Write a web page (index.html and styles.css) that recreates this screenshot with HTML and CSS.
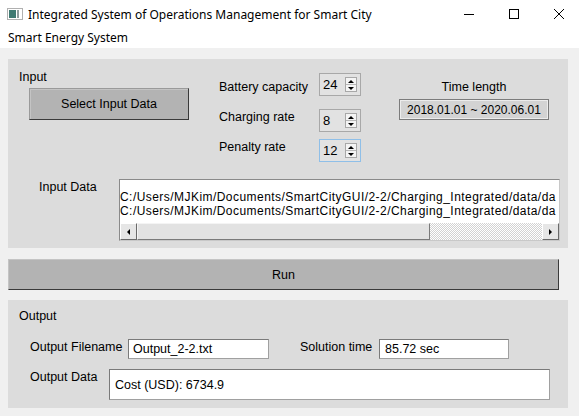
FILE: index.html
```html
<!DOCTYPE html>
<html>
<head>
<meta charset="utf-8">
<link rel="stylesheet" href="styles.css">
</head>
<body>
<div class="titlebar">
  <svg class="app-icon" width="16" height="12" viewBox="0 0 16 12">
    <rect x="0.5" y="0.5" width="15" height="11" fill="#fff" stroke="#b0b0b0"/>
    <rect x="2" y="2" width="7" height="8" fill="#3f7a72"/>
    <rect x="10" y="2" width="2" height="8" fill="#8f9c9c"/>
  </svg>
  <span class="title">Integrated System of Operations Management for Smart City</span>
  <div class="controls">
    <span class="ctl"><svg width="12" height="12" viewBox="0 0 12 12"><path d="M1 6.5h10" stroke="#000" stroke-width="1"/></svg></span>
    <span class="ctl"><svg width="12" height="12" viewBox="0 0 12 12"><rect x="1.5" y="1.5" width="9" height="9" fill="none" stroke="#000"/></svg></span>
    <span class="ctl"><svg width="12" height="12" viewBox="0 0 12 12"><path d="M1 1L11 11M11 1L1 11" stroke="#000" stroke-width="1"/></svg></span>
  </div>
</div>
<div class="menubar">Smart Energy System</div>
<div class="content">
  <section class="panel input-panel">
    <div class="top-row">
      <div class="col-a">
        <div class="group-title">Input</div>
        <div class="btn select-btn">Select Input Data</div>
      </div>
      <div class="col-b">
        <div class="param-labels">
          <div>Battery capacity</div>
          <div>Charging rate</div>
          <div>Penalty rate</div>
        </div>
        <div class="param-spins">
          <div class="spin s1"><span class="val">24</span><span class="spin-btns"><span class="up"></span><span class="down"></span></span></div>
          <div class="spin s2"><span class="val">8</span><span class="spin-btns"><span class="up"></span><span class="down"></span></span></div>
          <div class="spin s3 focus"><span class="val">12</span><span class="spin-btns"><span class="up"></span><span class="down"></span></span></div>
        </div>
      </div>
      <div class="col-c">
        <div class="time-label">Time length</div>
        <div class="time-box">2018.01.01 ~ 2020.06.01</div>
      </div>
    </div>
    <div class="data-row">
      <div class="data-label">Input Data</div>
      <div class="listbox">
        <div class="lines">
          <div>C:/Users/MJKim/Documents/SmartCityGUI/2-2/Charging_Integrated/data/da</div>
          <div>C:/Users/MJKim/Documents/SmartCityGUI/2-2/Charging_Integrated/data/da</div>
        </div>
        <div class="hscroll">
          <span class="arrow-btn left"></span>
          <span class="thumb"></span>
          <span class="track"></span>
          <span class="arrow-btn right"></span>
        </div>
      </div>
    </div>
  </section>
  <div class="btn run-btn">Run</div>
  <section class="panel output-panel">
    <div class="group-title out-title">Output</div>
    <div class="out-row">
      <div class="out-label fn-label">Output Filename</div>
      <div class="field fn-field">Output_2-2.txt</div>
      <div class="out-label st-label">Solution time</div>
      <div class="field st-field">85.72 sec</div>
    </div>
    <div class="out-row data-out">
      <div class="out-label od-label">Output Data</div>
      <div class="field od-field">Cost (USD): 6734.9</div>
    </div>
  </section>
</div>
</body>
</html>
```

FILE: styles.css
```css
* { box-sizing: border-box; }
html, body { margin: 0; padding: 0; }
body {
  width: 579px;
  height: 416px;
  overflow: hidden;
  background: #f0f0f0;
  color: #000;
  font-family: "Liberation Sans", Arial, sans-serif;
  font-size: 12.5px;
  white-space: nowrap;
}

/* title bar */
.titlebar {
  height: 28px;
  background: #fff;
  display: flex;
  align-items: center;
  padding-left: 7px;
  font-family: "Noto Sans", sans-serif;
  font-size: 12px;
  margin-right: -2px;
}
.app-icon { margin-right: 5px; margin-top: -1px; }
.title { flex: 1; }
.controls { display: flex; height: 28px; }
.ctl {
  width: 45px;
  display: flex;
  align-items: center;
  justify-content: center;
}

.menubar {
  height: 20px;
  line-height: 20px;
  background: #fff;
  padding-left: 8px;
  font-family: "Noto Sans", sans-serif;
  font-size: 12px;
}

.content { padding: 11px 11px 0 8px; }

.panel { background: #dcdcdc; width: 560px; }
.input-panel { height: 189px; }

.group-title { line-height: 16px; }

/* input panel */
.top-row { display: flex; height: 103px; }
.col-a { width: 211px; padding-left: 11px; }
.col-a .group-title { margin-top: 10px; }

.btn {
  background: #b3b3b3;
  border: 1px solid #9a9a9a;
  border-right-color: #3a3a3a;
  border-bottom-color: #3a3a3a;
  display: flex;
  align-items: center;
  justify-content: center;
}
.select-btn {
  margin-top: 3px;
  margin-left: 10px;
  width: 160px;
  height: 32px;
  box-shadow: inset 1px 1px 0 #c4c4c4;
}

.col-b { display: flex; width: 142px; }
.param-labels { width: 100px; padding-top: 13px; }
.param-labels div { line-height: 30px; }
.param-spins { width: 42px; }
.spin {
  width: 42px;
  height: 23px;
  border: 1px solid #a8a8a8;
  background: #e2e2e2;
  display: flex;
  align-items: center;
  padding-left: 3px;
  font-size: 13px;
}
.s1 { margin-top: 14px; }
.s2 { margin-top: 13px; }
.s3 { margin-top: 7px; }
.spin.focus { border-color: #8fbfe8; }
.spin-btns {
  margin-left: auto;
  margin-right: 3px;
  width: 12px;
  height: 15px;
  border: 1px solid #a8a8a8;
  background: #f4f4f4;
  display: flex;
  flex-direction: column;
}
.spin-btns span {
  flex: 1;
  display: flex;
  align-items: center;
  justify-content: center;
}
.spin-btns .up { border-bottom: 1px solid #b8b8b8; }
.spin-btns .up::after {
  content: "";
  border-left: 3px solid transparent;
  border-right: 3px solid transparent;
  border-bottom: 3px solid #000;
}
.spin-btns .down::after {
  content: "";
  border-left: 3px solid transparent;
  border-right: 3px solid transparent;
  border-top: 3px solid #000;
}

.col-c { margin-left: 38px; width: 150px; }
.time-label { margin-top: 18px; line-height: 20px; text-align: center; }
.time-box {
  margin-top: 2px;
  height: 21px;
  border: 1px solid #7c7c7c;
  background: #d3d3d3;
  box-shadow: inset 1px 1px 0 #ececec, inset -1px -1px 0 #ececec;
  display: flex;
  align-items: center;
  justify-content: center;
  font-size: 12px;
}

.data-row { display: flex; margin-top: 17px; }
.data-label { margin-left: 31px; width: 80px; line-height: 16px; }
.listbox {
  width: 441px;
  height: 62px;
  border: 1px solid #8a8a8a;
  border-right-color: #c8c8c8;
  border-bottom-color: #c8c8c8;
  background: #fff;
  display: flex;
  flex-direction: column;
}
.lines {
  height: 43px;
  padding-top: 11px;
  overflow: hidden;
  font-size: 12px;
  letter-spacing: 0.45px;
  line-height: 13.5px;
}
.hscroll { height: 17px; display: flex; }
.arrow-btn {
  width: 17px;
  background: #e6e6e6;
  border: 1px solid #fff;
  border-right-color: #6a6a6a;
  border-bottom-color: #6a6a6a;
  display: flex;
  align-items: center;
  justify-content: center;
}
.arrow-btn.left::after {
  content: "";
  border-top: 3px solid transparent;
  border-bottom: 3px solid transparent;
  border-right: 3px solid #000;
}
.arrow-btn.right::after {
  content: "";
  border-top: 3px solid transparent;
  border-bottom: 3px solid transparent;
  border-left: 3px solid #000;
}
.thumb {
  width: 293px;
  background: #e2e2e2;
  border: 1px solid #f4f4f4;
  border-right-color: #7a7a7a;
  border-bottom-color: #7a7a7a;
}
.track {
  flex: 1;
  background: repeating-conic-gradient(#ffffff 0 25%, #d2d2d2 0 50%) 0 0 / 2px 2px;
}

/* run */
.run-btn {
  margin-top: 11px;
  width: 551px;
  height: 31px;
  border-color: #c4c4c4 #3a3a3a #3a3a3a #c4c4c4;
}

/* output */
.output-panel { margin-top: 10px; height: 108px; padding-top: 8px; }
.out-title { padding-left: 11px; }
.out-row { display: flex; align-items: flex-start; margin-top: 15px; }
.out-label { line-height: 16px; }
.fn-label { margin-left: 22px; width: 98px; }
.st-label { margin-left: 31px; width: 79px; }
.field {
  background: #fff;
  border: 1px solid #7a7a7a;
  border-right-color: #a0a0a0;
  border-bottom-color: #a0a0a0;
  display: flex;
  align-items: center;
  padding-left: 4px;
}
.fn-field { width: 141px; height: 20px; }
.st-field { width: 130px; height: 20px; padding-left: 5px; }
.data-out { margin-top: 10px; }
.od-label { margin-left: 22px; width: 79px; }
.od-field { width: 441px; height: 31px; padding-left: 5px; }
```
